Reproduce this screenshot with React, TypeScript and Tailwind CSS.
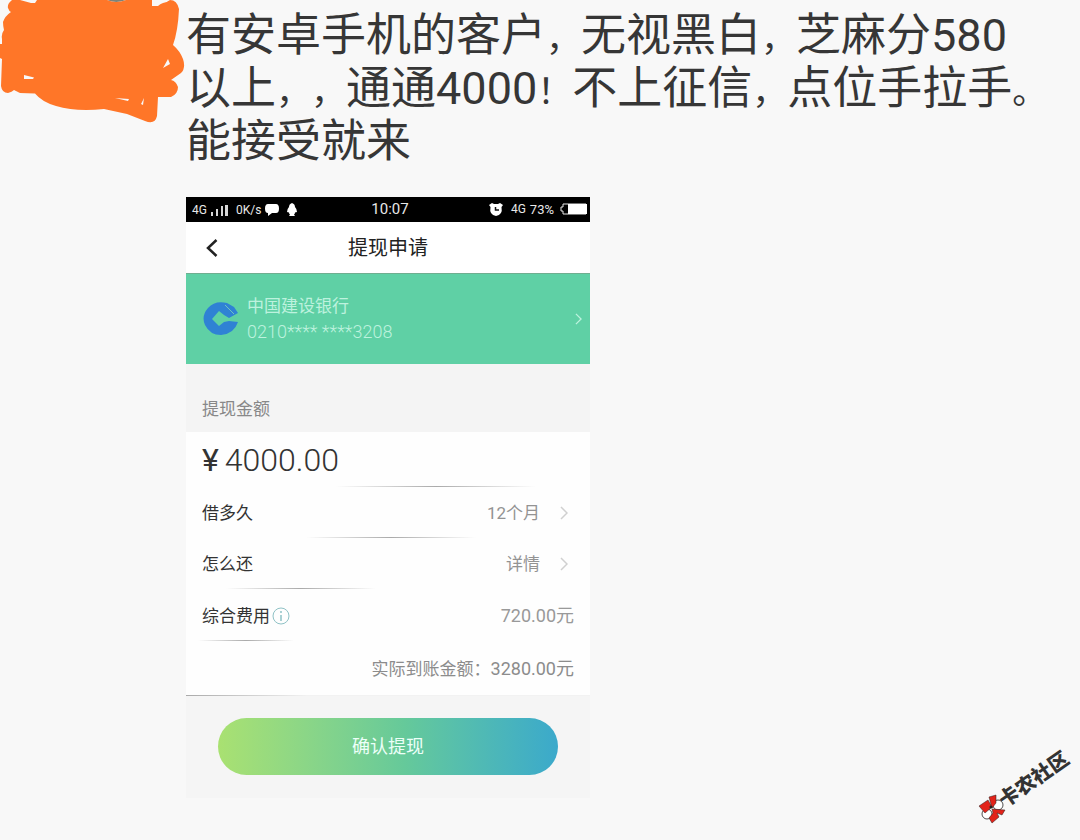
import React from "react";

const sans = "font-[Roboto,'Noto_Sans_CJK_SC',sans-serif]";

function Mark({ children }: { children: string }) {
  return <span className="text-[35px] leading-none">{children}</span>;
}

function Scribble() {
  return (
    <svg viewBox="0 0 186 124" className="block w-full" aria-hidden="true">
      <path d="M107 0H126Q116 4 107 0Z" fill="#7d8378" />
      <path
        fill="#ff7628"
        fillRule="evenodd"
        d="M12 0Q7 4 8 8Q9 11 11 12Q5 16 3 22Q3 26 4 30Q1 34 2 39L2 44L0 44V58L2 59L1 86Q2 93 8 93Q12 92 14 90L20 93L35 93.500Q42 102 56 106Q76 112 104 109L127 114L145 121Q155 125 157 116L158 97L171 97Q178 94 178 87Q176 81 171 80L181 73Q186 68 183 59Q180 51 173 45Q178 31 179 9Q177 0 170 0Q166 3 163 3Q160 4 158 6L152 6V0H126Q116 4 107 0H37L35 3L31 3L20 0ZM24 75L34 77.500L33 79H24ZM163 68L168 59L170 64ZM115 98L129 99L128 101ZM144 98L143 105L141 104Z"
      />
    </svg>
  );
}

function Chevron({ className }: { className: string }) {
  return (
    <svg viewBox="0 0 8 14" className={className} fill="none" stroke="currentColor" strokeWidth="1.500" aria-hidden="true">
      <path d="M1 1L7 7L1 13" />
    </svg>
  );
}

function StatusBar() {
  return (
    <div className="grid h-[25px] grid-cols-[1fr_auto_1fr] items-center bg-black pr-0.5 pl-1.5 text-xs text-[#e8e8e8]">
      <div className="flex items-center gap-1">
        <span>4G</span>
        <svg viewBox="0 0 17 12" className="h-3 w-[17px]" fill="#d8d8d8" aria-hidden="true">
          <rect x="0" y="8" width="2" height="4" />
          <rect x="5" y="5" width="2" height="7" />
          <rect x="10" y="2" width="2" height="10" />
          <rect x="14" y="1" width="3" height="11" />
        </svg>
        <span className="ml-1">0K/s</span>
        <svg viewBox="0 0 14 12" className="h-3 w-3.5" fill="#fff" aria-hidden="true">
          <path d="M3 0H11Q14 0 14 4.500Q14 9 11 9H7L3 12V9Q0 9 0 4.500Q0 0 3 0Z" />
        </svg>
        <svg viewBox="0 0 10 13" className="ml-1 h-[13px] w-2.5" fill="#fff" aria-hidden="true">
          <path d="M5 0Q8 1 8 4Q10 6 10 9L8 9.500Q8 11 7 11.500L8 13H2L3 11.500Q2 11 2 9.500L0 9Q0 6 2 4Q2 1 5 0Z" />
        </svg>
      </div>
      <span className="text-[15px]">10:07</span>
      <div className="flex items-center justify-end gap-1">
        <svg viewBox="0 0 14 13" className="mr-1 h-[13px] w-3.5" aria-hidden="true">
          <path d="M0 2L3 0L5 1H9L11 0L14 2L12.500 4Q14 12 7 13Q0 12 1.500 4Z" fill="#fff" />
          <path d="M6.500 4V7H10" fill="none" stroke="#111" strokeWidth="1.500" />
        </svg>
        <span>4G</span>
        <span className="text-[13px]">73%</span>
        <svg viewBox="0 0 28 12" className="ml-0.5 h-3 w-7" aria-hidden="true">
          <path d="M3 1H26V11H3V8H1V4H3Z" fill="none" stroke="#e8e8e8" />
          <rect x="8" y="1" width="19" height="10" fill="#fff" />
        </svg>
      </div>
    </div>
  );
}

function BankLogo() {
  return (
    <svg viewBox="0 0 36 36" className="size-9 shrink-0" aria-hidden="true">
      <path
        fill="#2f82d4"
        d="M24 2Q12 -1 5 7Q-2 15 2 24Q7 34 18 34Q31 33 35 21L26 20L21 21L16 25L9 18L16 10L21 14L26 17L35 12L31 6Z"
      />
      <path d="M22 4L31 13" stroke="#6fc3c0" />
    </svg>
  );
}

function Row({ label, value, line }: { label: string; value: string; line: string }) {
  return (
    <li>
      <button type="button" className="flex h-[50px] w-full items-center pt-0.5 pr-[22px] pl-4 text-left">
        <span className="grow text-[#333]">{label}</span>
        <span className="text-[#939393]">{value}</span>
        <Chevron className="ml-5 h-3.5 w-2 text-[#d0d0d0]" />
      </button>
      <div className={line} />
    </li>
  );
}

function PhoneScreen() {
  return (
    <section className="w-full max-w-[404px] bg-[#f5f5f5] text-[17px] leading-6">
      <StatusBar />
      <header className="grid h-[51px] grid-cols-[52px_1fr_52px] items-center bg-white">
        <button type="button" aria-label="返回" className="flex h-full items-center pl-5">
          <svg viewBox="0 0 12 18" className="h-[18px] w-3" fill="none" stroke="#222" strokeWidth="2.500" aria-hidden="true">
            <path d="M10.500 1L2 9L10.500 17" />
          </svg>
        </button>
        <h1 className="text-center text-xl text-[#222]">提现申请</h1>
      </header>
      <button type="button" className="flex h-[91px] w-full items-center gap-2 border-t border-[#6fae90] bg-[#5fd0a5] pr-2 pl-[17px] text-left text-[#bdf2de]">
        <BankLogo />
        <span className="grow">
          <span className="block leading-[26px]">中国建设银行</span>
          <span className="block text-lg leading-[26px] font-light">0210**** ****3208</span>
        </span>
        <Chevron className="h-3 w-[7px]" />
      </button>
      <h2 className="flex h-[68px] items-end bg-[#f4f4f4] px-4 pb-[11px] text-[#888]">提现金额</h2>
      <div className="bg-[#fefefe]">
        <p className="flex h-[54px] items-center gap-1.5 px-4 pt-0.5 text-[32px] text-[#333]">
          <span>¥</span>
          <span className="font-light">4000.00</span>
        </p>
        <div className="ml-[150px] h-px w-[200px] bg-linear-to-r from-transparent via-[#aaa] to-transparent" />
        <ul>
          <Row label="借多久" value="12个月" line="ml-[120px] h-px w-[170px] bg-linear-to-r from-transparent via-[#aaa] to-transparent" />
          <Row label="怎么还" value="详情" line="ml-[40px] h-px w-[150px] bg-linear-to-r from-transparent via-[#aaa] to-transparent" />
        </ul>
        <div className="flex h-[51px] items-center px-4 pt-0.5">
          <span className="text-[#333]">综合费用</span>
          <svg viewBox="0 0 18 18" className="ml-0.5 size-[18px]" fill="none" stroke="#8fc2c6" aria-hidden="true">
            <circle cx="9" cy="9" r="8" />
            <path d="M9 4V6M9 8V14" strokeWidth="1.500" />
          </svg>
          <span className="grow text-right text-lg text-[#999]">720.00元</span>
        </div>
        <div className="ml-3 h-px w-24 bg-linear-to-r from-transparent via-[#aaa] to-transparent" />
        <p className="flex h-[54px] items-center justify-end px-4 pt-0.5 text-[#8c8c8c]">
          <span>实际到账金额：</span>
          <span className="text-lg">3280.00元</span>
        </p>
        <div className="h-px w-full bg-linear-to-r from-[#aaa] to-[#f2f2f2] to-30%" />
      </div>
      <div className="px-8 pt-[22px] pb-[23px]">
        <button type="button" className="h-[57px] w-full rounded-full bg-linear-to-r from-[#a9e171] via-[#65c99a] via-55% to-[#3ba9cb] text-lg text-[#ecfff8]">
          确认提现
        </button>
      </div>
    </section>
  );
}

function Watermark() {
  return (
    <svg viewBox="0 0 100 80" className="absolute right-1 bottom-3 h-20 w-[100px]" role="img" aria-label="卡农社区">
      <g transform="translate(-2 -4)">
        <circle cx="24" cy="61" r="5" fill="#fff" stroke="#222" strokeWidth="0.800" />
        <circle cx="13" cy="70" r="5" fill="#fff" stroke="#222" strokeWidth="0.800" />
        <g fill="#e2231a" stroke="#222" strokeWidth="0.500">
          <path d="M5 62L14 56L18 63L11 69Z" />
          <path d="M15 53L22 51L22 59L18 64Z" />
          <path d="M18 65L31 66L28 71L23 69L25 73L18 79L15 74L19 69Z" />
        </g>
        <circle cx="17" cy="63" r="1.500" fill="#222" />
      </g>
      <text x="29" y="60" transform="rotate(-35 29 60)" fontSize="20" fontWeight="900" fill="#333" className={sans}>
        卡农社区
      </text>
    </svg>
  );
}

export default function App() {
  return (
    <main lang="zh-CN" className={"relative flex min-h-screen items-start overflow-hidden bg-[#f8f8f8] " + sans}>
      <div className="w-[186px] shrink-0">
        <Scribble />
      </div>
      <article className="min-w-0 grow pt-[9px]">
        <p className="mb-[29px] text-[45px] leading-[53px] text-[#363636] [text-spacing-trim:space-all]">
          有安卓手机的客户<Mark>，</Mark>无视黑白<Mark>，</Mark>芝麻分580
          <br />
          以上<Mark>，</Mark>
          <Mark>，</Mark>通通4000<Mark>！</Mark>不上征信<Mark>，</Mark>点位手拉手<Mark>。</Mark>
          <br />
          能接受就来
        </p>
        <PhoneScreen />
      </article>
      <Watermark />
    </main>
  );
}
